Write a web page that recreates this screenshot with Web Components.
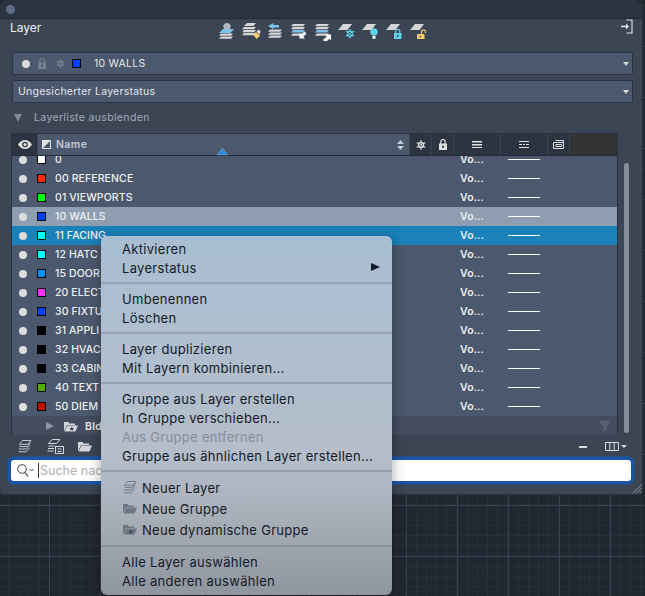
<!DOCTYPE html>
<html>
<head>
<meta charset="utf-8">
<title>Layer</title>
<style>
html, body { margin: 0; height: 596px; overflow: hidden; }
body {
  position: relative;
  font-family: Inter, "Liberation Sans", sans-serif;
  background-color: #212730;
  background-image:
    linear-gradient(to right, #394050 1px, transparent 1px),
    linear-gradient(to bottom, #394050 1px, transparent 1px),
    linear-gradient(to right, #2a303b 1px, transparent 1px),
    linear-gradient(to bottom, #2a303b 1px, transparent 1px);
  background-size: 51px 51px, 51px 51px, 10.2px 10.2px, 10.2px 10.2px;
  background-position: 49px 0, 0 -5px, 49px 0, 0 -5px;
}
</style>
</head>
<body>
<layer-panel>
  <layer-toolbar slot="toolbar"></layer-toolbar>
  <layer-combo slot="combos" layer>10 WALLS</layer-combo>
  <layer-combo slot="combos">Ungesicherter Layerstatus</layer-combo>
  <layer-table slot="table">
    <layer-row color="#ffffff">0</layer-row>
    <layer-row color="#ff2a00">00 REFERENCE</layer-row>
    <layer-row color="#00ff00">01 VIEWPORTS</layer-row>
    <layer-row color="#0040ff" state="hover">10 WALLS</layer-row>
    <layer-row color="#00ffff" state="selected">11 FACING</layer-row>
    <layer-row color="#00ffff">12 HATC</layer-row>
    <layer-row color="#0090ff">15 DOOR</layer-row>
    <layer-row color="#ff30ff">20 ELECT</layer-row>
    <layer-row color="#0040ff">30 FIXTU</layer-row>
    <layer-row color="#000000">31 APPLI</layer-row>
    <layer-row color="#000000">32 HVAC</layer-row>
    <layer-row color="#000000">33 CABIN</layer-row>
    <layer-row color="#55aa00">40 TEXT</layer-row>
    <layer-row color="#c01000">50 DIEM</layer-row>
    <layer-group-row>Bld</layer-group-row>
  </layer-table>
  <layer-search slot="search"></layer-search>
</layer-panel>

<context-menu>
  <menu-item>Aktivieren</menu-item>
  <menu-item submenu>Layerstatus</menu-item>
  <menu-sep></menu-sep>
  <menu-item>Umbenennen</menu-item>
  <menu-item>Löschen</menu-item>
  <menu-sep></menu-sep>
  <menu-item>Layer duplizieren</menu-item>
  <menu-item>Mit Layern kombinieren...</menu-item>
  <menu-sep></menu-sep>
  <menu-item>Gruppe aus Layer erstellen</menu-item>
  <menu-item>In Gruppe verschieben...</menu-item>
  <menu-item disabled>Aus Gruppe entfernen</menu-item>
  <menu-item>Gruppe aus ähnlichen Layer erstellen...</menu-item>
  <menu-sep></menu-sep>
  <menu-item icon="layer">Neuer Layer</menu-item>
  <menu-item icon="folder">Neue Gruppe</menu-item>
  <menu-item icon="dyn">Neue dynamische Gruppe</menu-item>
  <menu-sep></menu-sep>
  <menu-item>Alle Layer auswählen</menu-item>
  <menu-item>Alle anderen auswählen</menu-item>
</context-menu>

<script>
// small stack pieces shared by the toolbar icons
const plate = (c) => `<path d="M6 3h9l-4.500 6H1z" fill="${c}"/>`;
const stripe = (y, c, x = 0) => `<path d="M${4 + x} ${y}h12l-1.800 2.300H${2 + x}z" fill="${c}"/>`;
const GREY = '#d6d6d6', BLUE = '#79c3ee', CYAN = '#5fd0e6', GOLD = '#f7cb74';
const TOOL_ICONS = [
  `<circle cx="10" cy="5.500" r="3.600" fill="#b4b6b9"/><path d="M6 8h11l-3.500 4H2z" fill="${BLUE}"/>${stripe(12.500, GREY)}${stripe(15.500, GREY)}`,
  `<path d="M6 2h9l-2.500 3H3z" fill="${GREY}"/>${stripe(6, GREY, -1)}${stripe(9, GREY, -1)}${stripe(12, GREY, -1)}<path d="M12 14l3-3 4 3.500-3 3.500z" fill="${GOLD}"/><path d="M15.500 10.500l2.500-2 1.500 2-1 3z" fill="#e8e8e8"/>`,
  `<path d="M8.500 2L3 5l5.500 3.200V6.500H14V4H8.500z" fill="${BLUE}"/>${stripe(8.500, GREY, 1)}${stripe(11.500, GREY, 1)}${stripe(14.500, GREY, 1)}`,
  `${stripe(3, GREY)}${stripe(6, GREY)}<path d="M4 9h12l-2 2.600H2z" fill="${BLUE}"/>${stripe(12.500, GREY)}<path d="M17.500 12.500l-3.200 3.200 1.700 1.700H10.500V12l1.700 1.700 3.200-3.200z" fill="#fff"/>`,
  `${stripe(3, GREY)}${stripe(6, GREY)}<path d="M4 9h12l-2 2.600H2z" fill="${BLUE}"/>${stripe(12.500, GREY)}<path d="M10 19l3.800-3.800-1.700-1.700h5.900v5.900l-1.700-1.700-3.800 3.800z" fill="#fff"/>`,
  `${plate(GREY)}<g stroke="${CYAN}" stroke-width="1.200" fill="none"><path d="M13 8v9.500M9 10l8 5.200M17 10l-8 5.200"/></g><circle cx="13" cy="12.700" r="3.200" fill="${CYAN}"/><g fill="#33404f"><rect x="12.300" y="11" width="1.400" height="1.200"/><rect x="12.300" y="13.300" width="1.400" height="1.200"/><rect x="10.800" y="12.200" width="1.200" height="1"/><rect x="14" y="12.200" width="1.200" height="1"/></g>`,
  `${plate(GREY)}<circle cx="13" cy="11" r="3.700" fill="${CYAN}"/><rect x="11.500" y="15" width="3" height="2.800" fill="#fff"/>`,
  `${plate(GREY)}<rect x="9" y="12" width="7.500" height="6" fill="${CYAN}"/><path d="M10.700 12v-1.500a2 2 0 0 1 4.100 0V12" fill="none" stroke="${CYAN}" stroke-width="1.200"/><rect x="12" y="14" width="1.400" height="1.800" fill="#33404f"/>`,
  `${plate(GREY)}<rect x="8" y="13" width="7.500" height="5" fill="${GOLD}"/><path d="M12.500 13v-2a2 2 0 0 1 4-.200V12" fill="none" stroke="${GOLD}" stroke-width="1.200"/><rect x="10.500" y="14.800" width="1.400" height="1.400" fill="#33404f"/>`
];
const eyeIcon = '<svg width="14" height="9" viewBox="0 0 14 9"><path d="M0 4.500C2 1.500 4.500 0 7 0s5 1.500 7 4.500C12 7.500 9.500 9 7 9S2 7.500 0 4.500z" fill="#e4e4e4"/><circle cx="7" cy="4.500" r="2.800" fill="#2c3442"/><circle cx="7" cy="4.500" r="1.500" fill="#e4e4e4"/></svg>';
const freezeIcon = (c, s) => `<svg width="${s}" height="${s}" viewBox="0 0 10 10"><g stroke="${c}" stroke-width="1.100" fill="none"><path d="M5 0v10M.7 2.500l8.600 5M9.300 2.500l-8.600 5"/></g><circle cx="5" cy="5" r="3.200" fill="${c}"/><g fill="#2c3442"><rect x="4.400" y="3.200" width="1.200" height="1.200"/><rect x="4.400" y="5.600" width="1.200" height="1.200"/><rect x="3" y="4.500" width="1.100" height="1"/><rect x="5.900" y="4.500" width="1.100" height="1"/></g></svg>`;
const padlock = (c) => `<svg width="8" height="11" viewBox="0 0 8 11"><rect y="4.500" width="8" height="6.500" fill="${c}"/><path d="M1.800 5V2.700a2.200 2.200 0 0 1 4.400 0V5" fill="none" stroke="${c}" stroke-width="1.200"/><rect x="3.200" y="6.500" width="1.600" height="2.500" fill="#2c3442"/></svg>`;
const folderIcon = (c, star) => `<svg width="14" height="11" viewBox="0 0 14 11"><path d="M0 1h4.500l1 1.500H11V4H3L0 10.500z" fill="${c}"/><path d="M3.300 4.500H14l-2.500 6H.6z" fill="${c}"/>${star ? '<path d="M7.800 5.500l.7 1.500 1.500.2-1.100 1 .3 1.500-1.400-.7-1.400.7.300-1.500-1.100-1 1.500-.2z" fill="#3d4656"/>' : ''}</svg>`;
const newLayerIcon = (c) => `<svg width="14" height="13" viewBox="0 0 14 13"><g fill="none" stroke="${c}" stroke-width=".9"><path d="M4.500.5h8.500l-3.200 3.800H1.500zM1.500 6.500h7.500l3.500-3.800M1 9h7.500L12 5.200M.5 11.800h7.500L11.500 8"/></g></svg>`;

class LayerPanel extends HTMLElement {
  constructor() {
    super();
    this.attachShadow({ mode: 'open' }).innerHTML = `<style>
      :host { display: flex; flex-direction: column; width: 643px; height: 495px; box-sizing: border-box;
        background: #3b4554; border-radius: 7px 9px 6px 4px; border-right: 1px solid #2c3340; border-bottom: 1px solid #2c3340; overflow: hidden; color: #e6e8ea; }
      .title { height: 19px; flex: none; background: #2c3442; border-bottom: 1px solid #222833; display: flex; align-items: center; padding-left: 6px; box-sizing: border-box; }
      .title i { width: 9px; height: 9px; border-radius: 50%; background: #5e6c86; }
      .head { height: 33px; flex: none; display: flex; padding-left: 10px; position: relative; }
      .head span { font-size: 12px; line-height: 17px; color: #eceef0; }
      .exit { position: absolute; left: 621px; top: 0; }
      .combos { display: flex; flex-direction: column; gap: 5px; padding: 0 9px 0 12px; }
      .toggle { display: flex; align-items: center; height: 15px; margin: 7px 0 8px 14px; font-size: 10.500px; letter-spacing: .35px; color: #a3abb5; gap: 12px; }
      .toggle i { width: 0; height: 0; border-left: 4.500px solid transparent; border-right: 4.500px solid transparent; border-top: 8px solid #7d8693; }
      .tablewrap { display: flex; padding-left: 11px; height: 302px; flex: none; }
      .scroll { width: 5px; height: 270px; margin: 30px 0 0 6px; border-radius: 3px; background: #858d99; }
      .tools { display: flex; height: 19px; padding-top: 2px; align-items: center; padding-left: 18px; flex: none; position: relative; }
      .tools svg { flex: none; }
      .tools .gap { flex: 1; }
      .minus { width: 8px; height: 2px; background: #d8d8d8; margin-right: 18px; }
      .cols { margin-right: 15px; display: flex; align-items: center; gap: 2px; }
      .cols i { width: 0; height: 0; border-left: 3px solid transparent; border-right: 3px solid transparent; border-top: 3px solid #d8d8d8; }
      .grip { position: absolute; left: 632px; top: 484px; }
    </style>
    <div class="title"><i></i></div>
    <div class="head"><span>Layer</span><slot name="toolbar"></slot>
      <svg class="exit" width="12" height="15" viewBox="0 0 12 15"><path d="M5.500 1H11v13H5.500" fill="none" stroke="#e6e8ea" stroke-width="1.100"/><path d="M0 6.800h5V4.500l3 3-3 3V8.200H0z" fill="#e6e8ea"/></svg>
    </div>
    <div class="combos"><slot name="combos"></slot></div>
    <div class="toggle"><i></i><span>Layerliste ausblenden</span></div>
    <div class="tablewrap"><slot name="table"></slot><div class="scroll"></div></div>
    <div class="tools">
      ${newLayerIcon('#d4d6d9')}
      <svg style="margin-left:15px" width="17" height="16" viewBox="0 0 17 16"><g fill="none" stroke="#d4d6d9"><path d="M5 .5h8L9.500 4.500H1.500zM1.500 7h6M1 9.500h6M.5 12h6"/><rect x="8.500" y="7.500" width="8" height="7" fill="#3b4554"/><path d="M10.500 10h4M10.500 12.500h4"/></g></svg>
      <span style="margin-left:14px;display:flex">${folderIcon('#d4d6d9')}</span>
      <span class="gap"></span>
      <i class="minus"></i>
      <span class="cols"><svg width="14" height="9" viewBox="0 0 14 9"><path d="M.5.500h13v8H.500zM4.800.500v8M9.200.500v8" fill="none" stroke="#d8d8d8"/></svg><i></i></span>
    </div>
    <slot name="search"></slot>
    <svg class="grip" width="10" height="10" viewBox="0 0 10 10"><path d="M9.500 .5l-9 9M9.500 4l-5.500 5.500M9.500 7.500l-2 2" stroke="#8b929c" fill="none"/></svg>`;
  }
}

class LayerToolbar extends HTMLElement {
  constructor() {
    super();
    this.attachShadow({ mode: 'open' }).innerHTML = `<style>
      :host { display: flex; gap: 4px; margin-left: 176px; margin-top: 2px; height: 20px; }
      svg { display: block; }
    </style>` + TOOL_ICONS.map(i => `<svg width="20" height="20" viewBox="0 0 20 20">${i}</svg>`).join('');
  }
}

class LayerCombo extends HTMLElement {
  constructor() {
    super();
    const layer = this.hasAttribute('layer');
    this.attachShadow({ mode: 'open' }).innerHTML = `<style>
      :host { display: flex; align-items: center; height: 23px; box-sizing: border-box; background: #4c586d; border: 1px solid #2b3340; border-radius: 2px; font-size: 10.500px; letter-spacing: .25px; color: #e4e6ea; padding-left: ${layer ? 9 : 5}px; position: relative; }
      .dot { width: 8px; height: 8px; border-radius: 50%; background: #dcdcdc; margin-right: 8px; }
      .sw { width: 7px; height: 7px; border: 1px solid #000; background: #0040ff; margin: 0 13px 0 7px; }
      .dim { display: flex; opacity: .35; margin-right: 10px; }
      .arr { position: absolute; right: 3px; top: 9px; width: 0; height: 0; border-left: 3.500px solid transparent; border-right: 3.500px solid transparent; border-top: 4px solid #d8d8d8; }
    </style>
    ${layer ? `<span class="dot"></span><span class="dim">${padlock('#c8c8c8')}</span><span class="dim" style="margin-right:0">${freezeIcon('#c8c8c8', 9)}</span><span class="sw"></span>` : ''}
    <slot></slot><i class="arr"></i>`;
  }
}

class LayerTable extends HTMLElement {
  constructor() {
    super();
    this.attachShadow({ mode: 'open' }).innerHTML = `<style>
      :host { display: flex; flex-direction: column; width: 607px; height: 302px; position: relative; flex: none; border-left: 1px solid #2c3340; border-right: 1px solid #2c3340; box-sizing: border-box; }
      .hdr { display: flex; height: 23px; flex: none; background: #333; border-bottom: 1px solid #252b36; border-top: 1px solid #2c3442; box-sizing: border-box; }
      .hdr > div { display: flex; align-items: center; justify-content: center; background: #2c3442; border-right: 1px solid #3a4352; box-sizing: border-box; }
      .hdr .name { width: 372px; justify-content: flex-start; background: #4c586d; padding-left: 4px; gap: 5px; font-size: 10.500px; font-weight: 600; letter-spacing: .4px; color: #c6cbd2; position: relative; }
      .spin { position: absolute; right: 5px; top: 6px; }
      .rows { flex: 1; overflow: hidden; background: #4c586d; min-height: 0; }
      ::slotted(layer-row:first-child) { margin-top: -6px; }
      .sort { position: absolute; left: 204px; top: 14px; }
    </style>
    <div class="hdr">
      <div style="width:26px">${eyeIcon}</div>
      <div class="name"><svg width="9" height="9" viewBox="0 0 9 9"><rect width="9" height="9" fill="#e2e2e2"/><path d="M8 1v7H1z" fill="#4c586d"/></svg>Name
        <svg class="spin" width="7" height="10" viewBox="0 0 7 10"><path d="M3.500 0L7 4H0zM3.500 10L0 6h7z" fill="#c6cbd2"/></svg></div>
      <div style="width:22px">${freezeIcon('#d8d8d8', 10)}</div>
      <div style="width:22px">${padlock('#e0e0e0')}</div>
      <div style="width:47px"><svg width="10" height="7" viewBox="0 0 10 7"><path d="M0 0h10v1.500H0zM0 3h10v1.500H0zM0 6h10v1H0z" fill="#e0e0e0"/></svg></div>
      <div style="width:47px"><svg width="10" height="7" viewBox="0 0 10 7"><path d="M0 0h10v1H0zM0 3h3v1H0zM4 3h2v1H4zM7 3h3v1H7zM0 6h10v1H0z" fill="#e0e0e0"/></svg></div>
      <div style="width:22px"><svg width="11" height="9" viewBox="0 0 11 9"><path d="M.5 2.500h10v6H.5zM2.500 .5h8v2M3 4.500h5.500v2H3z" fill="none" stroke="#e0e0e0"/></svg></div>
    </div>
    <div class="rows"><slot></slot></div>
    <svg class="sort" width="13" height="9" viewBox="0 0 13 9"><path d="M6.500 1L12 8H1z" fill="#2f8be0" stroke="#7f93a8" stroke-width=".6"/></svg>`;
  }
}

class LayerRow extends HTMLElement {
  constructor() {
    super();
    const bg = { hover: '#8e9eb0', selected: '#1a82b8' }[this.getAttribute('state')] || 'transparent';
    this.attachShadow({ mode: 'open' }).innerHTML = `<style>
      :host { display: flex; align-items: center; height: 19px; background: ${bg}; font-size: 10.500px; font-weight: 500; letter-spacing: .1px; color: #eef0f2; position: relative; white-space: nowrap; }
      .dot { width: 8px; height: 8px; border-radius: 50%; background: #dcdcdc; margin-left: 7px; }
      .sw { width: 7px; height: 7px; border: 1px solid #000; margin-left: 10px; background: ${this.getAttribute('color')}; }
      .n { margin-left: 9px; width: 405px; overflow: hidden; flex: none; }
      .v { width: 48px; flex: none; font-weight: 600; }
      .l { width: 32px; height: 1px; background: #fff; flex: none; }
    </style>
    <span class="dot"></span><span class="sw"></span><span class="n"><slot></slot></span><span class="v">Vo...</span><span class="l"></span>`;
  }
}

class LayerGroupRow extends HTMLElement {
  constructor() {
    super();
    this.attachShadow({ mode: 'open' }).innerHTML = `<style>
      :host { display: flex; align-items: center; height: 20px; background: #434d5e; font-size: 10.500px; font-weight: 600; letter-spacing: .3px; color: #e6e8ea; position: relative; margin-top: 0; }
      i { width: 0; height: 0; border-top: 4.500px solid transparent; border-bottom: 4.500px solid transparent; border-left: 8px solid #8f97a3; margin-left: 34px; }
      svg { margin: 0 7px 0 10px; }
      svg.f { position: absolute; left: 587px; top: 4px; margin: 0; }
    </style><i></i>${folderIcon('#d4d6d9', true)}<slot></slot>
    <svg class="f" width="12" height="12" viewBox="0 0 12 12"><path d="M0 1h12L7.500 6.500V11h-3V6.500z" fill="#5a6474"/></svg>`;
  }
}

class LayerSearch extends HTMLElement {
  constructor() {
    super();
    this.attachShadow({ mode: 'open' }).innerHTML = `<style>
      :host { display: flex; align-items: center; height: 21px; margin: 4px 11px 0 11px; background: #fff; border-radius: 3px; box-shadow: 0 0 0 3.500px #1a56a8; font-size: 12.500px; color: #adb0b4; }
      svg { margin-left: 6px; flex: none; }
      b { width: 1px; height: 15px; background: #333; margin: 0 1px 0 4px; }
    </style>
    <svg width="17" height="13" viewBox="0 0 17 13"><circle cx="5" cy="5" r="4.300" fill="none" stroke="#444" stroke-width="1"/><path d="M8 8.500l3 4" stroke="#444" stroke-width="1.200"/><path d="M12.500 5l2 2 2-2" fill="none" stroke="#444"/></svg>
    <b></b><span>Suche nach Layer</span>`;
  }
}

class ContextMenu extends HTMLElement {
  constructor() {
    super();
    this.attachShadow({ mode: 'open' }).innerHTML = `<style>
      :host { position: absolute; left: 101px; top: 236px; width: 291px; height: 359px; box-sizing: border-box; padding: 3px 0 0; border-radius: 6px;
        display: flex; flex-direction: column;
        background: linear-gradient(to bottom, #a9bed2 0%, #afbfcf 30%, #b5bdc9 62%, #a9afb9 78%, #8f959e 100%);
        box-shadow: 0 3px 14px rgba(0,0,0,.35); color: #141a28; font-size: 13px; letter-spacing: .3px; }
    </style><slot></slot>`;
  }
}

class MenuItem extends HTMLElement {
  constructor() {
    super();
    const icon = this.getAttribute('icon');
    const glyph = { layer: newLayerIcon('#6f7681'), folder: folderIcon('#6f7681'), dyn: folderIcon('#6f7681', true) }[icon] || '';
    this.attachShadow({ mode: 'open' }).innerHTML = `<style>
      :host { display: flex; align-items: center; height: ${icon ? 21 : 19}px; padding-left: ${icon ? 22 : 21}px; flex: none; white-space: nowrap; position: relative; ${this.hasAttribute('disabled') ? 'color: #858d99;' : ''} }
      .ic { width: 19px; display: flex; flex: none; }
      .sub { position: absolute; left: 270px; top: 5px; width: 0; height: 0; border-top: 4.500px solid transparent; border-bottom: 4.500px solid transparent; border-left: 9px solid #14192a; }
    </style>${glyph ? `<span class="ic">${glyph}</span>` : ''}<slot></slot>${this.hasAttribute('submenu') ? '<i class="sub"></i>' : ''}`;
  }
}

class MenuSep extends HTMLElement {
  constructor() {
    super();
    this.attachShadow({ mode: 'open' }).innerHTML = `<style>
      :host { display: block; height: 12px; flex: none; position: relative; }
      i { position: absolute; left: 0; right: 0; top: 5px; height: 2px; background: rgba(110,120,135,.4); }
    </style><i></i>`;
  }
}

customElements.define('layer-panel', LayerPanel);
customElements.define('layer-toolbar', LayerToolbar);
customElements.define('layer-combo', LayerCombo);
customElements.define('layer-table', LayerTable);
customElements.define('layer-row', LayerRow);
customElements.define('layer-group-row', LayerGroupRow);
customElements.define('layer-search', LayerSearch);
customElements.define('context-menu', ContextMenu);
customElements.define('menu-item', MenuItem);
customElements.define('menu-sep', MenuSep);
</script>
</body>
</html>
